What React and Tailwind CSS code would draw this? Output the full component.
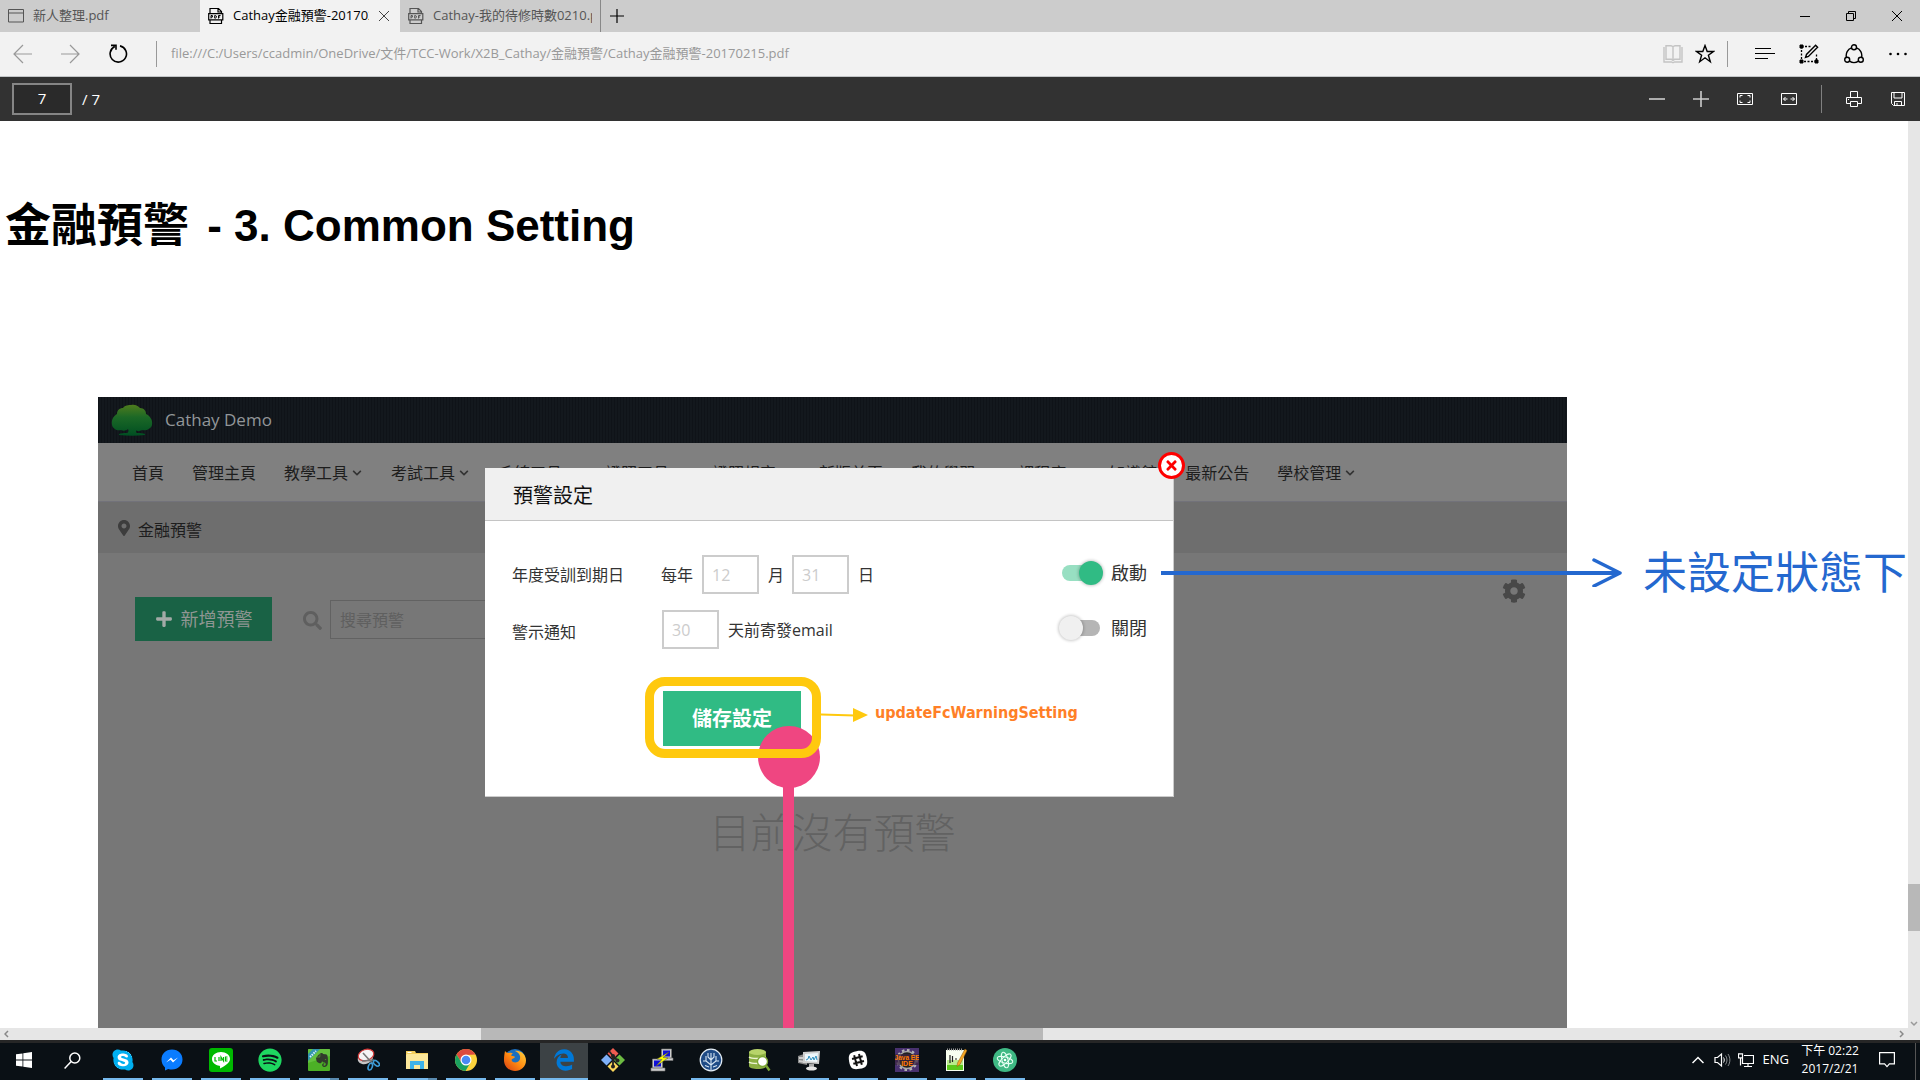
import React from "react";
import { FaCog, FaSearch, FaPlus, FaTimes, FaMapMarkerAlt, FaChevronDown, FaSkype, FaSpotify, FaEvernote } from "react-icons/fa";
import { FaEdgeLegacy } from "react-icons/fa6";

const line = { fill: "none", stroke: "currentColor" };

const PdfIcon = () => (
  <svg width="16" height="18" viewBox="0 0 16 18" {...line} className="shrink-0">
    <path d="M2 6.5V1.5h8.5l3 3v2M2 13v3.5h11.5V13M10 1.5v3.5h3.5" strokeWidth="1.2" />
    <path d="M.7 6.7h14.1v6.1H.7z" strokeWidth="1.2" />
    <path d="M3 11.5v-3h1.4v1.6H3M6.7 8.5v2.6h.7l.9-.6V9l-.9-.5zM10.5 11.5v-3h2M10.5 10h1.6" />
  </svg>
);
const WindowIcon = () => (
  <svg width="16" height="14" viewBox="0 0 16 14" {...line} className="shrink-0">
    <path d="M.5.5h15v12.5H.5zM.5 4h15" />
  </svg>
);

const tabs = [
  { title: "新人整理.pdf", icon: <WindowIcon /> },
  { title: "Cathay金融預警-20170215.pdf", icon: <PdfIcon />, active: true },
  { title: "Cathay-我的待修時數0210.pdf", icon: <PdfIcon /> },
];

function TabBar() {
  return (
    <header className="flex h-8 shrink-0 items-stretch bg-[#ccc] text-[13px]">
      {tabs.map((t) => (
        <div
          key={t.title}
          className={
            t.active
              ? "flex w-[200px] items-center gap-[9px] bg-[#f2f2f2] pl-2 pr-[10px] text-black"
              : "flex w-[200px] items-center gap-[9px] pl-2 pr-2 text-[#555]"
          }
        >
          {t.icon}
          <span className="min-w-0 flex-1 overflow-hidden whitespace-nowrap">{t.title}</span>
          {t.active && (
            <button aria-label="關閉分頁" className="flex h-6 w-3 items-center justify-end text-[#444]">
              <svg width="12" height="12" viewBox="0 0 12 12" {...line}><path d="m1 1 10 10M11 1 1 11" /></svg>
            </button>
          )}
        </div>
      ))}
      <button aria-label="新增分頁" className="flex w-8 items-center justify-center border-l border-[#888]">
        <svg width="14" height="14" viewBox="0 0 14 14" {...line}><path d="M7 0v14M0 7h14" strokeWidth="1.2" /></svg>
      </button>
      <div className="ml-auto flex">
        <button aria-label="最小化" className="flex w-[46px] items-center justify-center">
          <svg width="10" height="10" viewBox="0 0 10 10" {...line}><path d="M0 5.5h10" /></svg>
        </button>
        <button aria-label="往下還原" className="flex w-[46px] items-center justify-center">
          <svg width="10" height="10" viewBox="0 0 10 10" {...line}><path d="M.5 2.5h7v7h-7zM2.5 2.5v-2h7v7h-2" /></svg>
        </button>
        <button aria-label="關閉" className="flex w-[46px] items-center justify-center">
          <svg width="10" height="10" viewBox="0 0 10 10" {...line}><path d="m0 0 10 10M10 0 0 10" /></svg>
        </button>
      </div>
    </header>
  );
}

function AddressBar() {
  return (
    <div className="flex h-[45px] shrink-0 items-center border-b border-[#c3c6c8] bg-[#f2f2f2]">
      <button aria-label="上一頁" className="flex w-11 justify-center text-[#999]">
        <svg width="19" height="20" viewBox="0 0 19 20" {...line} strokeWidth="1.2"><path d="M10 1 1 10l9 9M1 10h18" /></svg>
      </button>
      <button aria-label="下一頁" className="ml-1 flex w-11 justify-center text-[#999]">
        <svg width="19" height="20" viewBox="0 0 19 20" {...line} strokeWidth="1.2"><path d="m9 1 9 9-9 9M18 10H0" /></svg>
      </button>
      <button aria-label="重新整理" className="ml-1 flex w-11 justify-center">
        <svg width="20" height="20" viewBox="0 0 20 20" {...line} strokeWidth="1.6"><path d="M12 1.9a8.2 8.2 0 1 1-5.2.6M3 1.4h5v4.4" /></svg>
      </button>
      <div className="ml-4 h-[26px] w-px bg-[#999]" />
      <input
        aria-label="網址"
        readOnly
        value="file:///C:/Users/ccadmin/OneDrive/文件/TCC-Work/X2B_Cathay/金融預警/Cathay金融預警-20170215.pdf"
        className="ml-[14px] min-w-0 flex-1 bg-transparent text-[13px] text-[#999] outline-none"
      />
      <button aria-label="閱讀檢視" className="flex w-8 justify-center text-[#c4c4c4]">
        <svg width="20" height="20" viewBox="0 0 20 20" {...line} strokeWidth="1.4"><path d="M3 1.7h5l2 1 2-1h5v13.6h-5.5l-1.5 1-1.5-1H3zM10 2.7V16M1 3v15h7.5l1.5.8 1.5-.8H19V3" /></svg>
      </button>
      <button aria-label="加到我的最愛" className="flex w-8 justify-center">
        <svg width="20" height="20" viewBox="0 0 20 20" {...line} strokeWidth="1.4"><path d="m10 1.6 2.2 5.9h6.2l-5 3.8 1.9 6.4-5.3-3.9-5.3 3.9 1.9-6.4-5-3.8h6.2z" /></svg>
      </button>
      <div className="ml-[6px] h-[26px] w-px bg-[#999]" />
      <button aria-label="中樞" className="ml-[15px] flex w-11 justify-center">
        <svg width="20" height="14" viewBox="0 0 20 14" {...line} strokeWidth="1.2"><path d="M0 1.5h16M0 6.5h20M0 11.5h13" /></svg>
      </button>
      <button aria-label="網頁筆記" className="flex w-11 justify-center">
        <svg width="20" height="20" viewBox="0 0 20 20" {...line}>
          <path d="M2.5 2.5h9M2.5 2.5v15h15V9" strokeDasharray="2 1.5" strokeWidth="1.3" />
          <path d="M1 1h3v3H1zM1 16h3v3H1zM16 16h3v3h-3z" fill="currentColor" />
          <path d="m6.5 13.5 1-3L16.6 1.300l2 2-9.200 9.200z" strokeWidth="1.4" />
        </svg>
      </button>
      <button aria-label="分享" className="flex w-[45px] justify-center">
        <svg width="20" height="20" viewBox="0 0 20 20" {...line} strokeWidth="1.4">
          <circle cx="10" cy="3.2" r="2.5" /><circle cx="3.2" cy="15.8" r="2.5" /><circle cx="16.8" cy="15.8" r="2.5" />
          <path d="M7.5 3.8A8.2 8.2 0 0 0 2.4 13.3M12.5 3.8a8.2 8.2 0 0 1 5.1 9.5M5.5 17.2a8.3 8.3 0 0 0 9 0" />
        </svg>
      </button>
      <button aria-label="更多" className="flex w-11 justify-center">
        <svg width="18" height="4" viewBox="0 0 18 4" fill="currentColor"><circle cx="1.5" cy="2" r="1.3" /><circle cx="9" cy="2" r="1.3" /><circle cx="16.5" cy="2" r="1.3" /></svg>
      </button>
    </div>
  );
}

const pdfTools = [
  ["縮小", <path key="p" d="M0 8h16" strokeWidth="1.6" stroke="#ccc" />],
  ["放大", <path key="p" d="M0 8h16M8 0v16" strokeWidth="1.6" stroke="#ccc" />],
  ["符合頁面", <path key="p" d="M.5 2.5h15v11H.5zM3 6.5v-2h2.5M10.5 4.5H13v2M13 9.5v2h-2.5M5.5 11.5H3v-2" />],
  ["符合寬度", <path key="p" d="M.5 2.5h15v11H.5zM2.5 8h4M9.5 8h4M4.5 6l-2 2 2 2M11.5 6l2 2-2 2" />],
];

function PdfBar() {
  return (
    <div className="flex h-11 shrink-0 items-center bg-[#323232] text-[15px] text-white">
      <input aria-label="頁碼" defaultValue="7" className="ml-3 h-8 w-[60px] border-2 border-[#858585] bg-[#2a2a2a] pb-[2px] text-center outline-none" />
      <span className="ml-[10px]">/ 7</span>
      <div className="ml-auto flex items-center">
        {pdfTools.map(([label, d]) => (
          <button key={label} aria-label={label} className="flex w-11 justify-center">
            <svg width="16" height="16" viewBox="0 0 16 16" {...line}>{d}</svg>
          </button>
        ))}
        <div className="ml-[10px] h-7 w-px bg-[#808080]" />
        <button aria-label="列印" className="ml-[10px] flex w-11 justify-center">
          <svg width="16" height="16" viewBox="0 0 16 16" {...line}><path d="M4.5 6.5v-6h7v6M4.5 12.5h-4v-6h15v6h-4M4.5 10.5h7v5h-7zM2 8.5h1" /></svg>
        </button>
        <button aria-label="儲存" className="flex w-11 justify-center">
          <svg width="14" height="14" viewBox="0 0 14 14" {...line}><path d="M.5.5h13v13H2.5l-2-2zM3 .5V6h8V.5M3.5 13.5v-4h7v4M6 11v2.5" /></svg>
        </button>
      </div>
    </div>
  );
}

const nav = [
  ["首頁"], ["管理主頁"], ["教學工具", 1], ["考試工具", 1], ["系統工具", 1], ["證照工具", 1], ["證照規定", 1],
  ["新版首頁"], ["我的學習", 1], ["課程庫", 1], ["知識館"], ["最新公告"], ["學校管理", 1],
];

const numberBox = "h-[39px] w-[57px] border-2 border-[#ccc] bg-white pl-2 text-base text-[#ccc] outline-none";

function Toggle({ id, label, on }) {
  return (
    <div className="mb-1 ml-auto flex h-6 items-center gap-[7px] text-lg text-[#333]">
      <input
        id={id}
        type="checkbox"
        role="switch"
        defaultChecked={on}
        className="relative h-6 w-[45px] appearance-none before:absolute before:left-[5px] before:top-1 before:h-4 before:w-[36px] before:rounded-full before:bg-[#b5b5b5] after:absolute after:left-0 after:top-0 after:size-6 after:rounded-full after:bg-[#f0f0f0] after:shadow-[0_0_3px_1px_rgba(0,0,0,0.2)] checked:before:left-[3px] checked:before:bg-[#98dfc2] checked:after:left-5 checked:after:bg-[#30bb84]"
      />
      <label htmlFor={id}>{label}</label>
    </div>
  );
}

function SettingDialog() {
  return (
    <section role="dialog" aria-labelledby="dlg-title" className="relative w-[689px] border-b border-r border-[#ccc] bg-white text-base text-[#333]">
      <h2 id="dlg-title" className="flex h-[53px] items-center border-b border-[#c4c4c4] bg-[#f0f0f0] pl-7 pt-1 text-xl text-[#111]">預警設定</h2>
      <button aria-label="關閉視窗" className="absolute -right-[12px] -top-4 flex size-[27px] items-center justify-center rounded-full border-[3px] border-[#fe0000] bg-white text-[#fe0000]">
        <FaTimes size={15} />
      </button>
      <form className="pb-[50px] pl-[27px] pr-[26px] pt-[34px]">
        <div className="flex items-center">
          <span className="w-[149px]">年度受訓到期日</span>
          <label htmlFor="month">每年</label>
          <input id="month" defaultValue="12" className={numberBox + " ml-[9px]"} />
          <label htmlFor="day" className="ml-[9px]">月</label>
          <input id="day" defaultValue="31" className={numberBox + " ml-2"} />
          <span className="ml-[9px]">日</span>
          <Toggle id="enabled" label="啟動" on />
        </div>
        <div className="mt-4 flex items-center">
          <label htmlFor="days" className="w-[150px] pt-1">警示通知</label>
          <input id="days" defaultValue="30" className={numberBox} />
          <span className="ml-[9px]">天前寄發email</span>
          <Toggle id="disabled" label="關閉" />
        </div>
        <div className="relative ml-[151px] mt-[42px] flex w-fit">
          <button type="button" className="h-[55px] w-[138px] bg-[#30bb84] text-xl font-bold text-white">儲存設定</button>
          <div className="absolute left-[120px] top-[66px] h-[1200px] w-[11px] bg-[#ef4681]" />
          <div className="absolute left-[95px] top-[35px] size-[62px] rounded-full bg-[#ef4681]" />
          <div className="absolute -bottom-3 -left-[18px] -right-5 -top-[14px] rounded-[20px] border-[9px] border-[#ffc90e]" />
          <div className="absolute left-[158px] top-[10px] flex items-center gap-[7px] whitespace-nowrap text-base font-bold leading-6 text-[#ff7f27]">
            <svg width="47" height="16" viewBox="0 0 47 16" className="mt-1">
              <path d="M0 7.5 34 8.5" stroke="#ffc90e" strokeWidth="2" /><path d="M32 1v14l15-7z" fill="#ffc90e" />
            </svg>
            <span className="font-['DejaVu_Sans_Condensed','DejaVu_Sans',sans-serif]">updateFcWarningSetting</span>
          </div>
        </div>
      </form>
      <div className="absolute left-[676px] top-[82px] flex h-11 items-center gap-[21px] whitespace-nowrap text-[44px] leading-[44px] text-[#2468cf]">
        <svg width="461" height="30" viewBox="0 0 461 30" {...line} strokeWidth="4"><path d="M0 16h457" /><path d="m433 3 26 13-26 13" strokeLinecap="round" strokeLinejoin="round" strokeWidth="3.5" /></svg>
        <span>未設定狀態下</span>
      </div>
    </section>
  );
}

function Slide() {
  return (
    <div className="relative ml-[98px] mr-[341px] mt-[134px] flex flex-1 flex-col bg-[#777] text-base text-[#1d1d1d]">
      <div className="flex h-[46px] items-center gap-3 bg-[repeating-linear-gradient(90deg,#0f1318_0_1px,#13181d_1px_3px)] pl-[13px] text-[17px] text-[#929699]">
        <svg width="42" height="32" viewBox="0 0 42 32">
          <defs><linearGradient id="tree" x1="0" y1="0" x2="0" y2="1"><stop offset="0" stopColor="#4f7c1d" /><stop offset=".4" stopColor="#1c6826" /><stop offset="1" stopColor="#004f22" /></linearGradient></defs>
          <path d="M1 21C0 15 3 12 6 10 6 6 9 4 12 4c2-3 6-3 8-3 4-1 7 1 9 3 4 0 6 3 6 6 4 2 7 6 6 11-1 4-6 6-10 5-2 1-5 2-6 0 0 2 0 3 1 3 3 0 6 0 8 1v1c-8 1-17 1-26 0v-1c2-1 5-1 8-1 1 0 2-2 1-4-2 2-5 2-7 1-4 1-8-1-9-5z" fill="url(#tree)" />
        </svg>
        <span>Cathay Demo</span>
      </div>
      <nav className="flex h-[59px] items-center gap-7 border-b border-[#72727a] bg-[#808080] pl-[34px] pt-[2px]">
        {nav.map(([label, menu]) => (
          <a key={label} href="#" className="flex shrink-0 items-center gap-1 whitespace-nowrap">
            {label}
            {menu && <FaChevronDown size={10} className="mr-px text-[#333]" />}
          </a>
        ))}
      </nav>
      <div className="flex h-[51px] items-center gap-2 bg-[#6e6e6e] pl-5">
        <FaMapMarkerAlt size={16} className="w-3 text-[#3d3d3d]" />
        <span className="pt-[5px]">金融預警</span>
      </div>
      <div className="flex items-start px-[37px] pt-11">
        <button className="flex h-11 w-[137px] items-center justify-center gap-2 bg-[#196245] text-lg text-[#8f9693]">
          <FaPlus size={18} className="text-[#a3aaa7]" />新增預警
        </button>
        <FaSearch size={19} className="ml-[31px] mt-[14px] text-[#5f5f5f]" />
        <input aria-label="搜尋預警" placeholder="搜尋預警" className="ml-2 mt-[3px] h-[39px] w-[320px] border border-[#626262] pl-[9px] outline-none placeholder:text-[#5f5f5f]" />
        <button aria-label="設定" className="-mt-[18px] ml-auto mr-[4px] text-[#484848]"><FaCog size={24} /></button>
      </div>
      <p className="mt-[162px] text-center text-[41px] font-light leading-[58px] text-[#626262]">目前沒有預警</p>
      <div className="absolute inset-x-0 top-[71px] flex justify-center pr-[6px]"><SettingDialog /></div>
    </div>
  );
}

function Page() {
  return (
    <div className="flex min-h-0 flex-1">
      <main className="flex min-w-0 flex-1 flex-col overflow-hidden bg-white">
        <h1 className="mt-[67px] pl-[5px] font-['Liberation_Sans','Noto_Sans_CJK_TC',sans-serif] text-[44px] font-bold leading-[74px] text-black">
          <span className="mr-[6px] text-[46px]">金融預警</span> - 3. Common Setting
        </h1>
        <Slide />
      </main>
      <div className="flex w-3 shrink-0 flex-col items-center bg-[#e6e6e6] text-[#999]">
        <div className="flex-[763]" />
        <div className="w-3 flex-[47] bg-[#b8b8b8]" />
        <div className="flex-[97]" />
        <svg width="8" height="8" viewBox="0 0 8 8" {...line} className="-mt-2"><path d="m1 2 3 3 3-3" strokeWidth="1.5" /></svg>
      </div>
    </div>
  );
}

const S = ({ children }) => <svg width="24" height="24" viewBox="0 0 24 24">{children}</svg>;

const apps = [
  ["Skype", "run", <FaSkype key="i" size={24} color="#00aff0" className="rounded-lg bg-[radial-gradient(white_55%,transparent_56%)]" />],
  ["Messenger", "run", <S key="i"><path d="M12 1.5C5.5 1.5 1.5 6 1.5 11.5c0 3.2 1.3 6 3.5 8v3l3.2-1.6c1.2.4 2.5.6 3.8.6 6.3 0 10.5-4.5 10.5-10S18.5 1.5 12 1.5z" fill="#0a7cff" /><path d="m6 14.5 5-5 2.5 2.8 4.5-2.8-5 5-2.5-2.8z" fill="#fff" /></S>],
  ["LINE", "run", <S key="i"><rect width="24" height="24" rx="3" fill="#00b900" /><path d="M12 4c-5 0-9 3-9 7 0 3.500 3.200 6.300 7.500 6.800 1 .3.500 1.500.5 2.700 2-1 10-5 10-9.500C21 7 17 4 12 4z" fill="#fff" /><path d="M6 9v4h2M10 9v4M12 13V9l2.500 4V9M18.500 9h-2v4h2M16.500 11h2" fill="none" stroke="#00b900" strokeWidth="1.2" /></S>],
  ["Spotify", "run", <FaSpotify key="i" size={24} color="#1ed760" />],
  ["Evernote", "multi", <S key="i"><rect x="1" y="1" width="22" height="22" rx="1" fill="#4cb026" /><path d="M1 1h22v7L1 15z" fill="#79cf55" opacity=".5" /><svg x="7" y="4" width="16" height="17" viewBox="0 0 16 17"><FaEvernote size={16} color="#313a2c" /></svg><path d="M1 6V13L13 1H6z" fill="#3195b0" /><path d="m3 9 6-6" stroke="#d9f3fa" strokeWidth="2" strokeDasharray="1.5 1" /></S>],
  ["剪取工具", "run", <S key="i"><ellipse cx="9.5" cy="10" rx="8" ry="6" fill="#c7c7c7" transform="rotate(-25 9 10)" /><ellipse cx="10" cy="7" rx="8" ry="5.5" fill="#f4f4f4" stroke="#d33a3a" strokeWidth="1.2" transform="rotate(-18 10 7)" /><path d="m7 5 10 11M6 13l12-1" stroke="#777" strokeWidth="1.6" /><ellipse cx="14.5" cy="18.5" rx="2" ry="3.5" fill="none" stroke="#3d9bd6" strokeWidth="1.6" transform="rotate(20 14 18)" /><ellipse cx="20" cy="15.5" rx="2" ry="3.5" fill="none" stroke="#3d9bd6" strokeWidth="1.6" transform="rotate(-50 20 15)" /></S>],
  ["檔案總管", "multi", <S key="i"><path d="M1 3h9l1 2h12v16H1z" fill="#f3cd5b" /><path d="M2 6h21v15H1V7z" fill="#fce79a" /><path d="M5 21v-8h14v8h-4v-4H9v4z" fill="#3fb2e8" /><path d="M2.5 4.5h4" stroke="#fff" /></S>],
  ["Chrome", "run", <S key="i"><circle cx="12" cy="12" r="11" fill="#fdd33c" /><path d="M2.5 6.5A11 11 0 0 1 21.5 6.5L12 7l-4.5 7.5z" fill="#dd4b3e" /><path d="M2.5 6.5A11 11 0 0 0 11.5 23l5-8.5-9 0z" fill="#1aa15f" /><circle cx="12" cy="12" r="5.5" fill="#fff" /><circle cx="12" cy="12" r="4.3" fill="#4a8af4" /></S>],
  ["Firefox", "run", <S key="i"><defs><linearGradient id="fox" x1="1" y1="0" x2="0" y2="1"><stop offset="0" stopColor="#ffd23a" /><stop offset=".5" stopColor="#ff8a12" /><stop offset="1" stopColor="#d63a12" /></linearGradient></defs><circle cx="12" cy="11.5" r="10.5" fill="#1c6fc0" /><path d="M2 3c1 1 2 2 3.5 2C7 4.5 9 5 10 5.5 9 6 8 7 8.5 8c1.500 0 3 .2 3.500 1-1 1.500-3 1.500-3.500 3 .5 2.500 4 3 6 2 2-1 3-3 2.500-6C16 5 14 4 12 3c5-1 11 3 11 9.500 0 6-5 10.500-11 10.500S1 18.500 1 12C1 8 1.500 5.500 2 3z" fill="url(#fox)" /></S>],
  ["Edge", "active", <FaEdgeLegacy key="i" size={22} color="#0078d7" />],
  ["Git", "", <S key="i"><path d="m12 0 5.5 5.5L12 11 6.5 5.5z" fill="#f05c50" /><path d="m5.5 6.5 5.5 5.5-5.5 5.5L0 12z" fill="#7fb0f7" /><path d="m18.5 6.5L24 12l-5.5 5.5L13 12z" fill="#6dbb42" /><path d="m12 13 5.5 5.5L12 24l-5.5-5.5z" fill="#fbd75b" /><path d="M8 3l4 5v11M12 8l5 5" fill="none" stroke="#222" strokeWidth="1.8" /><circle cx="12" cy="8" r="2" fill="#222" /><circle cx="12" cy="18.5" r="2" fill="#222" /><circle cx="16.5" cy="12.5" r="2" fill="#222" /></S>],
  ["PuTTY", "", <S key="i"><g fill="#ccc" stroke="#777" strokeWidth=".6"><path d="M11.5 1h10v9h-10zM11 10h12v2.5H11zM2.5 11h10v9h-10zM1 20h14v3H1z" /></g><path d="M13 2.5h7v6h-7zM4 12.5h7v6H4z" fill="#1010d8" /><path d="m19 4-12 7 5 .5-6 6.500 12-8-5-.5z" fill="#ff0" stroke="#553" strokeWidth=".5" /></S>],
  ["SourceTree", "run", <S key="i"><circle cx="12" cy="12" r="10.800" fill="#1f4b86" stroke="#e4edf5" strokeWidth="1.2" /><path d="M12 22V5M12 17l-5-4V8M12 17l5-4V8M12 12 9 9V5M12 12l3-3V5M7 13H4M17 13h3M10 19l-4-1.500M14 19l4-1.500" fill="none" stroke="#d6e5f2" strokeWidth="1.1" /></S>],
  ["資料庫工具", "run", <S key="i"><path d="M1 4v14c0 2 4 3 9 3s8-1 8-3V4z" fill="#8cb043" /><ellipse cx="9.5" cy="4" rx="8.5" ry="3" fill="#b7d36a" /><path d="M1 9c2 2 14 2 17 0M1 14c2 2 14 2 17 0" fill="none" stroke="#eef5d5" strokeWidth="1.4" /><circle cx="14.5" cy="13.5" r="5" fill="#fff" stroke="#7ba534" strokeWidth="1.3" /><path d="m18 17.500 3.500 5" stroke="#7ba534" strokeWidth="2.4" /></S>],
  ["效能監視器", "run", <S key="i"><path d="m1 8 9-3v12l-9-2z" fill="#8a8a8a" /><path d="m2 9 6 0v2l-6 0zM2 12l6 1v2l-6-1z" fill="#ccc" /><path d="m6 4 17-1-1 13-16-1z" fill="#cfcfcf" /><path d="m8 6 13-1-1 9-12-1z" fill="#eef7fb" /><path d="M9 12l2-1 1-3 2 4 2-3 1 3 2-4 1 4" fill="none" stroke="#2f8fbf" /><path d="M12 16h5v3h-5z" fill="#aaa" /><ellipse cx="14.5" cy="20.5" rx="5.500" ry="2" fill="#e4e4e4" /></S>],
  ["Slack", "run", <S key="i"><path d="M12 3c7 0 9 2 9 9s-2 9-9 9-9-2-9-9 2-9 9-9z" fill="#fff" transform="rotate(-10 12 12)" /><path d="M9.5 6.5v11M14.500 6.500v11M6.500 9.500h11M6.500 14.500h11" stroke="#111" strokeWidth="2" transform="rotate(-15 12 12)" /></S>],
  ["Java EE IDE", "run", <S key="i"><rect width="24" height="24" fill="#48316f" /><circle cx="12" cy="12" r="8.5" fill="#222" stroke="#aaa" strokeWidth="1.5" /><circle cx="12" cy="12" r="10" fill="none" stroke="#b5b5b5" strokeWidth="2" strokeDasharray="2.600 2.600" /><rect y="6" width="24" height="11" fill="#3a2340" opacity=".7" /><text x="12" y="11.5" textAnchor="middle" fontSize="6.5" fontWeight="700" fill="#ff7b00" fontFamily="Liberation Sans">Java EE</text><text x="12" y="17.500" textAnchor="middle" fontSize="7" fontWeight="700" fill="#ff7b00" fontFamily="Liberation Sans">IDE</text></S>],
  ["Notepad++", "run", <S key="i"><path d="M2 2h18v21H2z" fill="#f8fff0" /><path d="M3 16h16v6H3z" fill="#5bc91c" /><path d="M3 12h16v5H3z" fill="#b9eb8d" /><path d="M3 1.5h16" stroke="#999" strokeWidth="2" strokeDasharray="1 1" /><path d="M6 7v8M8.500 8v6M11 11h2" stroke="#222" strokeWidth="1.2" /><path d="m21 1 2 1.500-7 14-3 2 .5-3.500z" fill="#f5a623" stroke="#8d5a16" strokeWidth=".5" /></S>],
  ["Atom", "run", <S key="i"><circle cx="12" cy="12" r="12" fill="#3fb984" /><g fill="none" stroke="#e6fff3" strokeWidth="1"><ellipse cx="12" cy="12" rx="3" ry="8" transform="rotate(-15 12 12)" /><ellipse cx="12" cy="12" rx="3" ry="8" transform="rotate(45 12 12)" /><ellipse cx="12" cy="12" rx="3" ry="8" transform="rotate(105 12 12)" /></g><circle cx="12" cy="12" r="1.3" fill="#fff" /></S>],
];

function Taskbar() {
  return (
    <footer className="flex h-10 shrink-0 items-stretch border-t-[3px] border-[#262626] bg-[#0a1015] text-xs text-white">
      <button aria-label="開始" className="flex w-12 items-center justify-center pb-[3px]">
        <svg width="16" height="16" viewBox="0 0 16 16" fill="#fff"><path d="M0 2.3 6.5 1.4v6.2H0zM7.3 1.3 16 0v7.6H7.3zM0 8.4h6.5v6.2L0 13.7zM7.3 8.4H16V16l-8.7-1.3z" /></svg>
      </button>
      <button aria-label="搜尋" className="flex w-[49px] items-center justify-center pb-[3px]">
        <svg width="17" height="17" viewBox="0 0 17 17" {...line} strokeWidth="1.5"><circle cx="10.8" cy="6" r="5" /><path d="M7.2 9.6.6 16.4" /></svg>
      </button>
      <div className="flex gap-px pl-[2px]">
        {apps.map(([name, state, icon]) => (
          <button
            key={name}
            aria-label={name}
            className={state === "active" ? "relative flex w-12 items-center justify-center bg-[#3c4245] pb-[3px]" : "relative flex w-12 items-center justify-center pb-[3px]"}
          >
            {icon}
            {state === "active" && <span className="absolute inset-x-0 bottom-0 h-[2px] bg-[#76b9ed]" />}
            {state === "run" && <span className="absolute inset-x-1 bottom-0 h-[2px] bg-[#76b9ed]" />}
            {state === "multi" && <span className="absolute inset-x-1 bottom-0 h-[2px] border-r-[9px] border-[#5a8bb0] bg-[#76b9ed]" />}
          </button>
        ))}
      </div>
      <div className="ml-auto flex">
        <div className="flex items-center pb-[3px]">
          <svg width="12" height="8" viewBox="0 0 12 8" {...line} strokeWidth="1.5"><path d="m.5 7 5.5-5.500L11.5 7" /></svg>
          <svg width="17" height="16" viewBox="0 0 17 16" {...line} className="ml-[10px]"><path d="M1 5.5h2.500l4-3.500v12l-4-3.500H1z" strokeWidth="1.2" /><path d="M9.5 5.5c1 1.500 1 3.500 0 5" /><path d="M11.5 3.5c2 3 2 6 0 9M14 2c2.500 4 2.500 8 0 12" opacity=".5" /></svg>
          <svg width="16" height="15" viewBox="0 0 16 15" {...line} className="ml-[7px]" strokeWidth="1.2"><path d="M6 2.5h9.500v8H4.500v-5M10 10.500v3M6 13.500h8M.5.8h4v4h-4zM2.500 4.800v7.700" /></svg>
          <span className="ml-[9px] text-[13px]">ENG</span>
          <time className="ml-3 w-[58px] whitespace-nowrap text-center leading-[18px]">下午 02:22<br />2017/2/21</time>
          <button aria-label="控制中心" className="ml-5">
            <svg width="16" height="16" viewBox="0 0 16 16" {...line} strokeWidth="1.2"><path d="M.6.6h14.800v11.300h-5L8 14.700l-2.400-2.800h-5z" /></svg>
          </button>
        </div>
        <div className="ml-5 mr-1 h-full w-px bg-[#555]" />
      </div>
    </footer>
  );
}

export default function App() {
  return (
    <div className="flex h-screen flex-col overflow-hidden bg-white font-['Open_Sans','Noto_Sans_CJK_TC',sans-serif]">
      <TabBar />
      <AddressBar />
      <PdfBar />
      <Page />
      <div className="flex h-3 shrink-0 items-center bg-[#e6e6e6] px-1 text-[#888]">
        <svg width="5" height="8" viewBox="0 0 5 8" {...line} strokeWidth="1.5"><path d="M4 1 1 4l3 3" /></svg>
        <div className="flex-[472]" />
        <div className="h-3 flex-[561] bg-[#b8b8b8]" />
        <div className="flex-[856]" />
        <svg width="5" height="8" viewBox="0 0 5 8" {...line} strokeWidth="1.5" className="mr-3"><path d="m1 1 3 3-3 3" /></svg>
      </div>
      <Taskbar />
    </div>
  );
}
